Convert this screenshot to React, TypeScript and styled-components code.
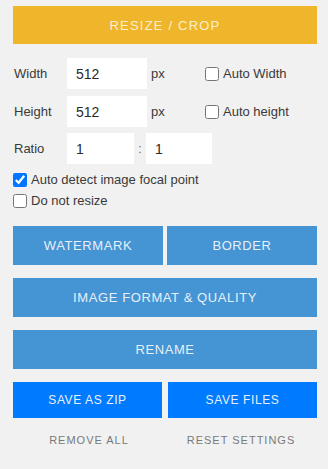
import React, { useState } from 'react';
import styled, { createGlobalStyle } from 'styled-components';

const GlobalStyle = createGlobalStyle`
  html, body {
    margin: 0;
    padding: 0;
    background: #f1f1f1;
  }
  * { box-sizing: border-box; }
`;

const Panel = styled.div`
  width: 328px;
  padding: 6px 11px 20px 13px;
  font-family: 'Liberation Sans', Arial, sans-serif;
  color: #3a3a3a;
  display: flex;
  flex-direction: column;
`;

const ActionButton = styled.button<{ $tone: 'orange' | 'blue' | 'primary'; $h: number }>`
  display: flex;
  align-items: center;
  justify-content: center;
  flex: 1;
  height: ${p => p.$h}px;
  border: none;
  border-radius: 0;
  padding: 0;
  margin: 0;
  cursor: pointer;
  font-family: 'Liberation Sans', Arial, sans-serif;
  font-size: ${p => (p.$tone === 'primary' ? 12 : 13)}px;
  letter-spacing: ${p => (p.$tone === 'orange' ? 1.2 : 0.6)}px;
  text-transform: uppercase;
  color: ${p => (p.$tone === 'orange' ? '#fbeed0' : '#e6f0fa')};
  background: ${p =>
    p.$tone === 'orange' ? '#f0b62b' : p.$tone === 'blue' ? '#4594d3' : '#007bff'};
`;

const ButtonRow = styled.div<{ $gap: number; $mt: number }>`
  display: flex;
  gap: ${p => p.$gap}px;
  margin-top: ${p => p.$mt}px;
`;

const FieldRow = styled.div<{ $mt: number }>`
  display: flex;
  align-items: center;
  margin-top: ${p => p.$mt}px;
  font-size: 13px;
`;

const FieldLabel = styled.span`
  width: 54px;
  padding-left: 1px;
`;

const NumberInput = styled.input<{ $w: number }>`
  width: ${p => p.$w}px;
  height: 31px;
  border: none;
  background: #ffffff;
  padding: 0 0 0 9px;
  font-family: 'Liberation Sans', Arial, sans-serif;
  font-size: 14px;
  color: #2a2a2a;
  outline: none;
`;

const Unit = styled.span`
  width: 58px;
  padding-left: 4px;
`;

const Colon = styled.span`
  width: 12px;
  text-align: center;
  font-size: 12px;
  color: #666;
`;

const CheckLabel = styled.label<{ $mt?: number }>`
  display: flex;
  align-items: center;
  gap: 4px;
  font-size: 13px;
  margin-top: ${p => p.$mt ?? 0}px;
  cursor: pointer;
`;

const CheckBox = styled.input`
  width: 14px;
  height: 14px;
  margin: 0;
  accent-color: #0075ff;
`;

const LinkRow = styled.div`
  display: flex;
  margin-top: 16px;
`;

const TextLink = styled.button`
  flex: 1;
  border: none;
  background: none;
  padding: 0;
  font-family: 'Liberation Sans', Arial, sans-serif;
  font-size: 11px;
  letter-spacing: 1px;
  color: #7a7a7a;
  text-transform: uppercase;
  cursor: pointer;
`;

const App = () => {
  const [autoWidth, setAutoWidth] = useState(false);
  const [autoHeight, setAutoHeight] = useState(false);
  const [focal, setFocal] = useState(true);
  const [noResize, setNoResize] = useState(false);

  return (
    <>
      <GlobalStyle />
      <Panel>
        <ButtonRow $gap={0} $mt={0}>
          <ActionButton $tone="orange" $h={38}>Resize / Crop</ActionButton>
        </ButtonRow>

        <FieldRow $mt={14}>
          <FieldLabel>Width</FieldLabel>
          <NumberInput $w={80} defaultValue="512" />
          <Unit>px</Unit>
          <CheckLabel>
            <CheckBox type="checkbox" checked={autoWidth} onChange={e => setAutoWidth(e.target.checked)} />
            Auto Width
          </CheckLabel>
        </FieldRow>

        <FieldRow $mt={7}>
          <FieldLabel>Height</FieldLabel>
          <NumberInput $w={80} defaultValue="512" />
          <Unit>px</Unit>
          <CheckLabel>
            <CheckBox type="checkbox" checked={autoHeight} onChange={e => setAutoHeight(e.target.checked)} />
            Auto height
          </CheckLabel>
        </FieldRow>

        <FieldRow $mt={6}>
          <FieldLabel>Ratio</FieldLabel>
          <NumberInput $w={67} defaultValue="1" />
          <Colon>:</Colon>
          <NumberInput $w={66} defaultValue="1" />
        </FieldRow>

        <CheckLabel $mt={8}>
          <CheckBox type="checkbox" checked={focal} onChange={e => setFocal(e.target.checked)} />
          Auto detect image focal point
        </CheckLabel>
        <CheckLabel $mt={6}>
          <CheckBox type="checkbox" checked={noResize} onChange={e => setNoResize(e.target.checked)} />
          Do not resize
        </CheckLabel>

        <ButtonRow $gap={4} $mt={18}>
          <ActionButton $tone="blue" $h={39}>Watermark</ActionButton>
          <ActionButton $tone="blue" $h={39}>Border</ActionButton>
        </ButtonRow>
        <ButtonRow $gap={0} $mt={13}>
          <ActionButton $tone="blue" $h={39}>Image format &amp; quality</ActionButton>
        </ButtonRow>
        <ButtonRow $gap={0} $mt={13}>
          <ActionButton $tone="blue" $h={39}>Rename</ActionButton>
        </ButtonRow>
        <ButtonRow $gap={6} $mt={13}>
          <ActionButton $tone="primary" $h={36}>Save as zip</ActionButton>
          <ActionButton $tone="primary" $h={36}>Save files</ActionButton>
        </ButtonRow>

        <LinkRow>
          <TextLink>Remove all</TextLink>
          <TextLink>Reset settings</TextLink>
        </LinkRow>
      </Panel>
    </>
  );
};

export default App;
